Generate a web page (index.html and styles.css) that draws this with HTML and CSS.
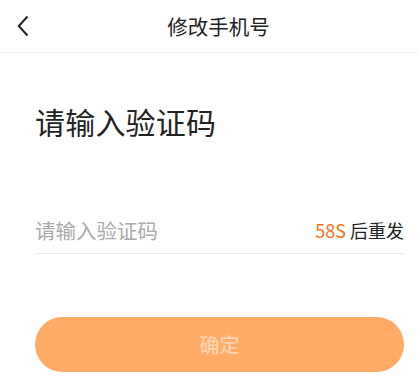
FILE: index.html
```html
<!DOCTYPE html>
<html lang="zh-CN">
<head>
<meta charset="utf-8"/>
<title>修改手机号</title>
<link rel="stylesheet" href="styles.css">
</head>
<body>
<div class="header">
    <a class="back" href="#">
        <svg width="12" height="22" viewBox="0 0 12 22"><polyline points="10.5,1.5 1.8,11 10.5,20.5" fill="none" stroke="#222" stroke-width="2"/></svg>
    </a>
    <h1 class="title">修改手机号</h1>
</div>
<div class="main">
    <h2 class="tip">请输入验证码</h2>
    <div class="code_row">
        <input class="code_input" type="text" placeholder="请输入验证码"/>
        <span class="resend"><em>58S</em> 后重发</span>
    </div>
    <button class="btn_ok" type="button">确定</button>
</div>
</body>
</html>
```

FILE: styles.css
```css
body,h1,h2{margin:0;padding:0;}
body{background:#fff;font-family:"Noto Sans CJK SC","Noto Sans",sans-serif;color:#222;}
.header{height:52px;border-bottom:1px solid #f2f2f2;display:flex;align-items:center;justify-content:center;position:relative;padding-left:18px;}
.back{position:absolute;left:17px;top:15px;display:block;width:12px;height:22px;}
.back svg{display:block;}
.title{font-size:20.5px;font-weight:normal;line-height:26px;color:#222;}
.main{padding:52px 15px 0 35px;}
.tip{font-size:30px;font-weight:normal;line-height:32px;color:#222;letter-spacing:0.2px;}
.code_row{display:flex;align-items:center;height:46px;margin-top:70px;border-bottom:1px solid #ebebeb;}
.code_input{flex:1;border:none;outline:none;padding:0;font-family:inherit;font-size:20.5px;color:#222;background:none;}
.code_input::placeholder{color:#aaa;}
.resend{font-size:18px;color:#222;}
.resend em{font-style:normal;color:#f5711c;}
.btn_ok{display:block;width:369px;height:55px;margin-top:63px;border:none;border-radius:28px;background:#ffab66;color:#ffd3b1;font-family:inherit;font-size:20px;font-weight:500;}
```
